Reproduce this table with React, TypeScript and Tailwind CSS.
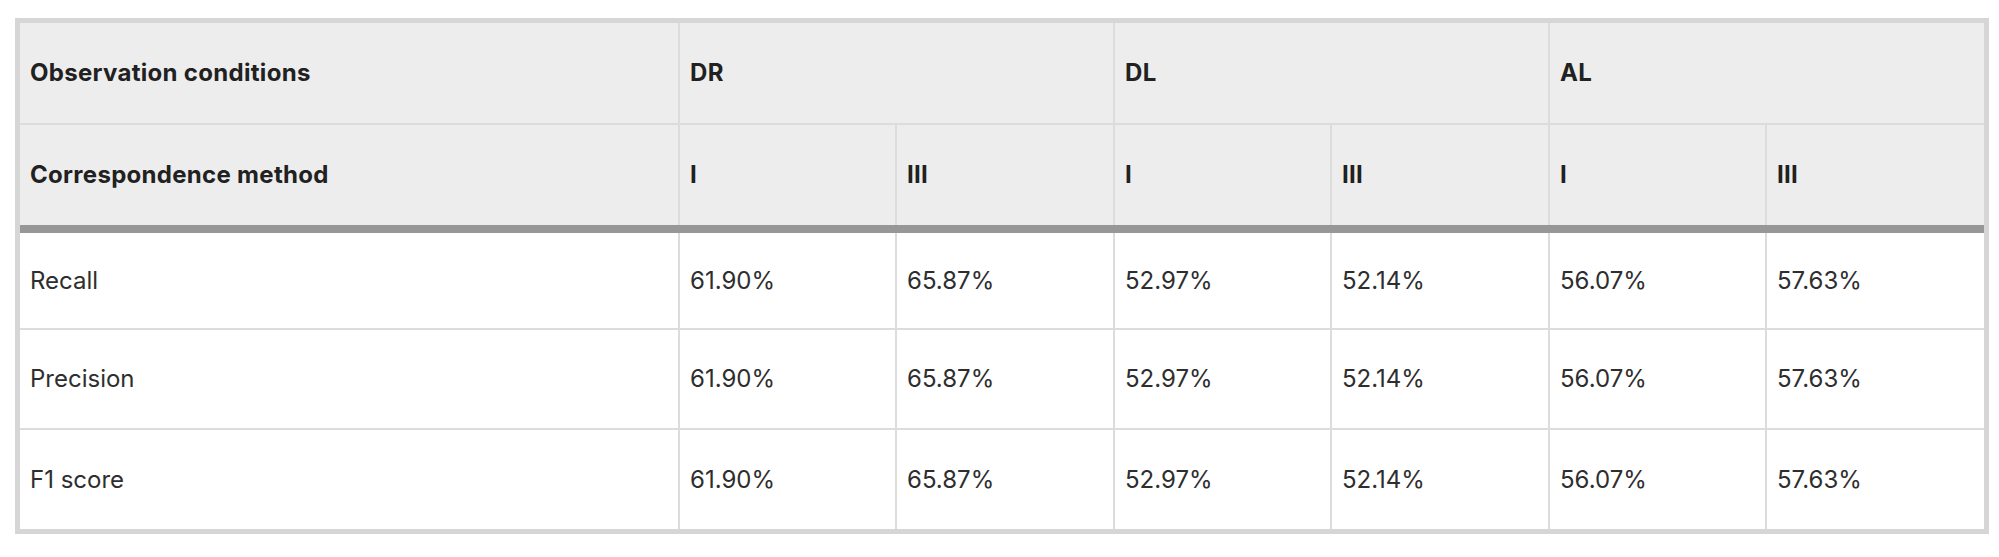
import React from "react";

const groups = ["DR", "DL", "AL"];
const methods = ["I", "III", "I", "III", "I", "III"];
const values = ["61.90%", "65.87%", "52.97%", "52.14%", "56.07%", "57.63%"];
const rows = ["Recall", "Precision", "F1 score"];
const widths = [659, 217, 218, 217, 218, 217, 218];

export default function App() {
  return (
    <div className="w-[1999px] h-[557px] bg-white pt-[18px] pl-[15px] font-['Inter',sans-serif]">
      <div className="w-[1974px] border-[5px] border-[#d6d6d6]">
        <table className="table-fixed border-collapse border-hidden w-full text-[24px]">
          <colgroup>
            {widths.map((w, i) => (
              <col key={i} style={{ width: w }} />
            ))}
          </colgroup>
          <thead className="bg-[#ededed] text-[#212121] font-bold text-left tracking-[0.3px]">
            <tr>
              <th className="h-[101px] px-[10px] border-2 border-[#dcdcdc]">Observation conditions</th>
              {groups.map((g) => (
                <th key={g} colSpan={2} className="h-[101px] px-[10px] border-2 border-[#dcdcdc]">
                  {g}
                </th>
              ))}
            </tr>
            <tr>
              <th className="h-[105px] px-[10px] border-2 border-[#dcdcdc] border-b-[8px] border-b-[#979797]">
                Correspondence method
              </th>
              {methods.map((m, i) => (
                <th key={i} className="h-[105px] px-[10px] border-2 border-[#dcdcdc] border-b-[8px] border-b-[#979797]">
                  {m}
                </th>
              ))}
            </tr>
          </thead>
          <tbody className="text-[#2e2e2e]">
            {rows.map((r) => (
              <tr key={r}>
                <td className="h-[100px] px-[10px] border-2 border-[#dcdcdc]">{r}</td>
                {values.map((v, i) => (
                  <td key={i} className="h-[100px] px-[10px] border-2 border-[#dcdcdc]">
                    {v}
                  </td>
                ))}
              </tr>
            ))}
          </tbody>
        </table>
      </div>
    </div>
  );
}
